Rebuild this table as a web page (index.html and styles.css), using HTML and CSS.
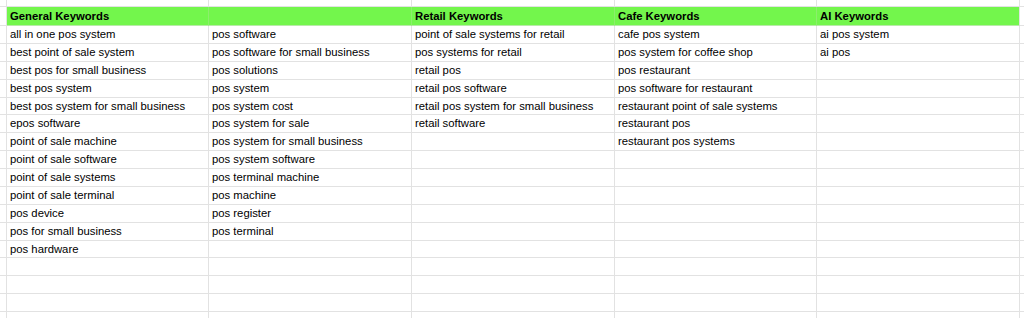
FILE: index.html
```html
<!DOCTYPE html>
<html lang="en">
<head>
<meta charset="utf-8">
<title>POS Keywords</title>
<link rel="stylesheet" href="styles.css">
</head>
<body>
<div class="sheet">
  <div class="row r-top"><div class="c"></div><div class="c"></div><div class="c"></div><div class="c"></div><div class="c"></div><div class="c"></div><div class="c"></div></div>
  <div class="row r-head"><div class="c"></div><div class="c h">General Keywords</div><div class="c h"></div><div class="c h">Retail Keywords</div><div class="c h">Cafe Keywords</div><div class="c h">AI Keywords</div><div class="c"></div></div>
  <div class="row"><div class="c"></div><div class="c">all in one pos system</div><div class="c">pos software</div><div class="c">point of sale systems for retail</div><div class="c">cafe pos system</div><div class="c">ai pos system</div><div class="c"></div></div>
  <div class="row"><div class="c"></div><div class="c">best point of sale system</div><div class="c">pos software for small business</div><div class="c">pos systems for retail</div><div class="c">pos system for coffee shop</div><div class="c">ai pos</div><div class="c"></div></div>
  <div class="row"><div class="c"></div><div class="c">best pos for small business</div><div class="c">pos solutions</div><div class="c">retail pos</div><div class="c">pos restaurant</div><div class="c"></div><div class="c"></div></div>
  <div class="row"><div class="c"></div><div class="c">best pos system</div><div class="c">pos system</div><div class="c">retail pos software</div><div class="c">pos software for restaurant</div><div class="c"></div><div class="c"></div></div>
  <div class="row short"><div class="c"></div><div class="c">best pos system for small business</div><div class="c">pos system cost</div><div class="c">retail pos system for small business</div><div class="c">restaurant point of sale systems</div><div class="c"></div><div class="c"></div></div>
  <div class="row"><div class="c"></div><div class="c">epos software</div><div class="c">pos system for sale</div><div class="c">retail software</div><div class="c">restaurant pos</div><div class="c"></div><div class="c"></div></div>
  <div class="row"><div class="c"></div><div class="c">point of sale machine</div><div class="c">pos system for small business</div><div class="c"></div><div class="c">restaurant pos systems</div><div class="c"></div><div class="c"></div></div>
  <div class="row"><div class="c"></div><div class="c">point of sale software</div><div class="c">pos system software</div><div class="c"></div><div class="c"></div><div class="c"></div><div class="c"></div></div>
  <div class="row"><div class="c"></div><div class="c">point of sale systems</div><div class="c">pos terminal machine</div><div class="c"></div><div class="c"></div><div class="c"></div><div class="c"></div></div>
  <div class="row"><div class="c"></div><div class="c">point of sale terminal</div><div class="c">pos machine</div><div class="c"></div><div class="c"></div><div class="c"></div><div class="c"></div></div>
  <div class="row"><div class="c"></div><div class="c">pos device</div><div class="c">pos register</div><div class="c"></div><div class="c"></div><div class="c"></div><div class="c"></div></div>
  <div class="row"><div class="c"></div><div class="c">pos for small business</div><div class="c">pos terminal</div><div class="c"></div><div class="c"></div><div class="c"></div><div class="c"></div></div>
  <div class="row short"><div class="c"></div><div class="c">pos hardware</div><div class="c"></div><div class="c"></div><div class="c"></div><div class="c"></div><div class="c"></div></div>
  <div class="row"><div class="c"></div><div class="c"></div><div class="c"></div><div class="c"></div><div class="c"></div><div class="c"></div><div class="c"></div></div>
  <div class="row"><div class="c"></div><div class="c"></div><div class="c"></div><div class="c"></div><div class="c"></div><div class="c"></div><div class="c"></div></div>
  <div class="row"><div class="c"></div><div class="c"></div><div class="c"></div><div class="c"></div><div class="c"></div><div class="c"></div><div class="c"></div></div>
  <div class="row"><div class="c"></div><div class="c"></div><div class="c"></div><div class="c"></div><div class="c"></div><div class="c"></div><div class="c"></div></div>
</div>
</body>
</html>
```
FILE: styles.css
```css
html, body {
  margin: 0;
  padding: 0;
  background: #ffffff;
  overflow: hidden;
}

.sheet {
  display: flex;
  flex-direction: column;
  width: 1024px;
  height: 318px;
  overflow: hidden;
  font-family: "Liberation Sans", Arial, sans-serif;
  font-size: 11.3px;
  color: #000000;
}

.row {
  display: grid;
  grid-template-columns: 7px 202px 203px 203px 202px 203px 1fr;
  height: 18px;
  flex: none;
}

.row.short {
  height: 17px;
}

.row.r-top {
  height: 7px;
}

.row.r-head {
  height: 19px;
}

.c {
  box-sizing: border-box;
  border-right: 1px solid #e2e2e2;
  border-bottom: 1px solid #e2e2e2;
  padding: 0 3px;
  display: flex;
  align-items: center;
  white-space: nowrap;
  overflow: hidden;
  line-height: 13px;
}

.c.h {
  background: #73f64c;
  font-weight: bold;
  border-right-color: #8cee6c;
  border-bottom-color: #b8eaa8;
}

.row.r-head .c:nth-child(6) {
  border-right-color: #e2e2e2;
}
```
